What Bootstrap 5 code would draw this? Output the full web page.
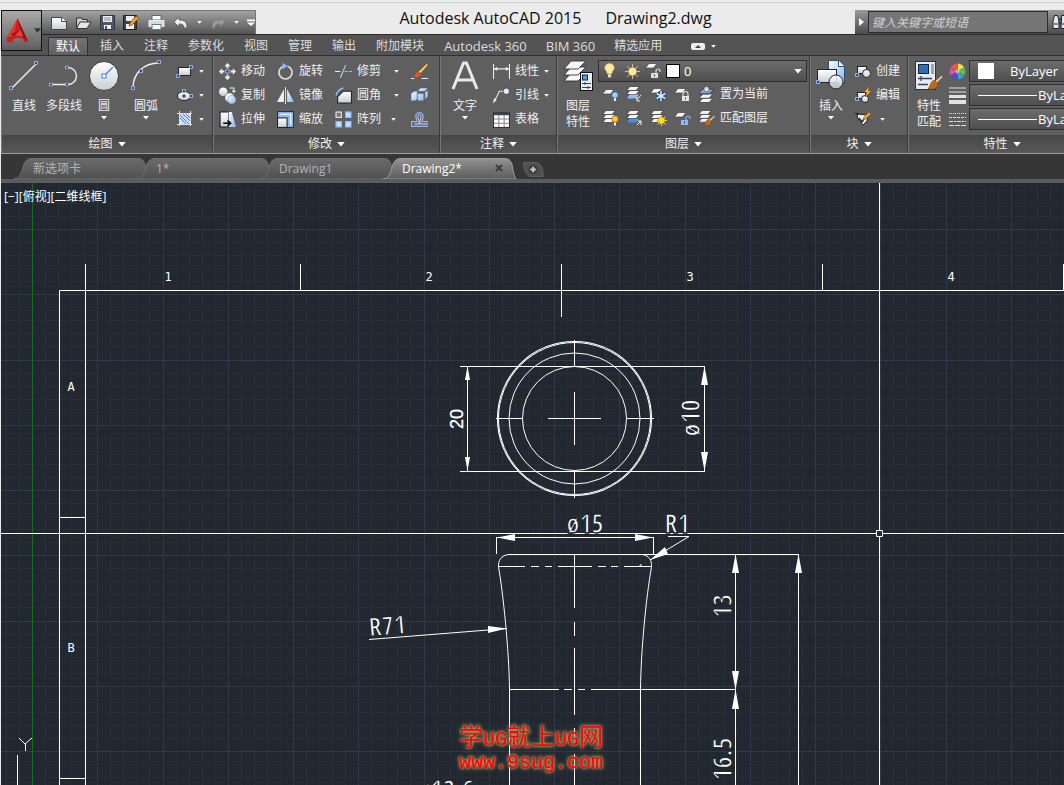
<!DOCTYPE html>
<html lang="zh-CN">
<head>
<meta charset="utf-8">
<meta name="viewport" content="width=device-width, initial-scale=1">
<title>Autodesk AutoCAD 2015 - Drawing2.dwg</title>
<link rel="stylesheet" href="https://cdn.jsdelivr.net/npm/bootstrap@5.3.0/dist/css/bootstrap.min.css">
<style>
body{font:12px/16px "Open Sans","Noto Sans CJK SC",sans-serif;color:#f0f0f0;background:#ebebeb;overflow:hidden}
button{color:inherit;background:none;border:0;padding:0;font:inherit}
svg{display:block;flex:none}
.topline{height:10px;padding-top:2px}
.topline::before{content:"";display:block;height:1px;background:#cfcfcf}
.head{display:grid;grid-template-columns:42px minmax(0,1fr);grid-template-rows:24px 21px;background:#ebebeb}
.appbtn{grid-column:1;grid-row:1/3;z-index:1;height:41px;margin-left:1px;border:1px solid #111;background:linear-gradient(#aaa,#5e5e5e)}
.titlerow{grid-column:2;grid-row:1}
.menu{grid-column:1/3;grid-row:2;background:#545454;border-top:1px solid #2b2b2b;margin-left:1px;padding-left:45px}
.qat{width:214px;padding-left:9px;background:linear-gradient(#a2a2a2,#545454);border-top:1px solid #777;border-right:1px solid #777}
.wintitle{font-size:16px;line-height:16px;color:#111;padding-bottom:8px;white-space:nowrap}
.search{width:209px;background:linear-gradient(#999,#4c4c4c);overflow:hidden}
.search input{flex:none;width:180px;height:22px;background:#757575;border:1px solid #2c2c2c;color:#fff;font:italic 12px/20px "Open Sans","Noto Sans CJK SC",sans-serif;padding:0 3px;border-radius:0}
.search input::placeholder{color:#d2d2d2;opacity:1}
.menu button{height:18px;padding:0 10px;color:#dcdcdc;align-self:end;white-space:nowrap}
.menu .lat{font-size:13px;padding:0 9px 0 10px}
.menu .cur{color:#fff;background:linear-gradient(#747474,#606060);border:1px solid #2f2f2f;border-bottom:0;padding:0 7px;margin:0 2px;border-radius:2px 2px 0 0}
.ribbon{background:#5f5f5f;border-top:1px solid #2f2f2f;height:98px;overflow:hidden;margin-left:1px}
.pane{flex:none;border-right:1px solid #3a3a3a;border-left:1px solid #787878;display:flex;flex-direction:column}
.pane-body{height:79px;padding-top:3px;display:flex;align-items:flex-start}
.pane-name{height:18px;background:linear-gradient(#474747,#585858);width:100%;display:flex;justify-content:center;align-items:center;gap:5px}
.w-draw{width:212px}.w-mod{width:227px}.w-note{width:117px}.w-layer{width:253px}.w-block{width:98px}.w-prop{width:188px}
.w-draw .pane-body{padding-left:2px}
.w-mod .pane-body{padding-left:5px}
.big{width:40px;display:flex;flex-direction:column;align-items:center;height:68px}
.big.wide{width:44px}
.big svg.ic{height:32px;width:32px;margin-bottom:7px}
.big .dn{margin-top:2px}
.stack{display:grid;grid-auto-rows:24px;align-items:center;height:72px}
.tool{display:flex;align-items:center;gap:5px;height:24px;white-space:nowrap}
.tool .dn{margin-left:5px}
.combo{height:22px;background:linear-gradient(#6c6c6c,#4f4f4f);border:1px solid #2e2e2e;display:flex;align-items:center}
.combo select{appearance:none;background:none;border:0;color:#fff;font:inherit;font-size:13px;line-height:18px;padding:0;height:20px;flex:1;outline:0}
.combo option{color:#000}
.layer-combo{width:209px;margin-top:1px}
.layer-grid{display:grid;grid-template-columns:repeat(4,24px) auto;grid-auto-rows:24px;align-items:center;padding-left:4px}
.marks{width:20px}
.props{width:126px}
.chip{width:14px;height:14px;background:#fff;border:1px solid #000}
.chip2{width:16px;height:16px;background:#fff}
.work{min-height:0}
.files{height:30px;background:#363636;border-top:1px solid #9b9b9b;border-bottom:4px solid #5c5c5c;margin-left:1px;padding:4px 0 0 22px}
.ftab{position:relative;width:123px;height:21px;color:#b4b4b4;text-align:left;padding:0 0 0 10px;line-height:20px}
.ftab .shape{position:absolute;left:-9px;top:0;z-index:0}
.ftab span{position:relative;z-index:1}
.ftab.on{color:#fff;z-index:2}
.ftab .x{position:absolute;z-index:1;right:12px;top:6px}
.sheet{background:#212830;margin-left:1px;min-height:0;overflow:hidden;position:relative}
.sheet>svg{width:100%;height:100%}
.cad{stroke:#fff;fill:none;stroke-width:1}
.cad .solid{fill:#fff;stroke:none}
.dim{font-family:"Liberation Sans Narrow","Open Sans Condensed","DejaVu Sans Light",sans-serif;font-size:26px;fill:#fff;stroke:#212830;stroke-width:1.4;text-anchor:middle}
.mono{font:12px "DejaVu Sans Mono",monospace;fill:#fff;text-anchor:middle}
.wm{font:20px "Liberation Mono",monospace;fill:#f00;stroke:#f00;stroke-width:.3;text-anchor:middle;filter:drop-shadow(0 0 1px #cdbb7d) drop-shadow(0 0 2px #9d8b5d)}
.wm .han{font-size:24px;stroke:none;font-family:"Noto Sans CJK SC",sans-serif}
</style>
</head>
<body class="vh-100 d-flex flex-column">
<svg width="0" height="0" class="position-absolute" aria-hidden="true">
<defs>
<linearGradient id="gw" x2="0" y2="1"><stop stop-color="#fff"/><stop offset="1" stop-color="#c9ced6"/></linearGradient>
<linearGradient id="gb" x2="1" y2="1"><stop stop-color="#fff"/><stop offset="1" stop-color="#7fb2ee"/></linearGradient>
<linearGradient id="gt" x2="0" y2="1"><stop stop-color="#6b6b6b"/><stop offset="1" stop-color="#505050"/></linearGradient>
<linearGradient id="ga" x2="0" y2="1"><stop stop-color="#929292"/><stop offset="1" stop-color="#5c5c5c"/></linearGradient>
<symbol id="dn" viewBox="0 0 6 4"><path d="M0 0h6L3 3.5z" fill="#fff"/></symbol>
<symbol id="grip" viewBox="0 0 4 4"><path d="M.5 .5h3v3h-3z" fill="#444" stroke="#8bb8ff"/></symbol>
<symbol id="sheetw" viewBox="0 0 12 6"><path d="M4 .5h8L8.500 5H.5z" fill="#f4f4f4" stroke="#333" stroke-width=".6"/></symbol>
<symbol id="sheets" viewBox="0 0 14 13"><g fill="#f4f4f4" stroke="#333" stroke-width=".7"><path d="M4 8.500h9.500L10 12.500H.5z"/><path d="M4 4.500h9.500L10 8.500H.5z"/><path d="M4 .5h9.500L10 4.500H.5z"/></g></symbol>
<symbol id="bulb" viewBox="0 0 10 15"><path d="M5 .5a4 4 0 0 1 3 7L7 10H3L2 7.500a4 4 0 0 1 3-7z" fill="#ffe99a" stroke="#d8b860" stroke-width=".6"/><path d="M3.500 10.500h3v3h-3z" fill="#ddd"/></symbol>
<symbol id="brush" viewBox="0 0 16 16"><path d="M15 0l1 2-7 7-2-2z" fill="#e8c98c" stroke="#533" stroke-width=".5"/><path d="M7 5l4 4c0 4-4 6-10 5 2-2 2-7 6-9z" fill="#c06a1c" stroke="#6b3408" stroke-width=".5"/></symbol>
<symbol id="lock" viewBox="0 0 9 10"><path d="M2 5V3a2.500 2.500 0 0 1 5 0v2" fill="none" stroke="#ddd" stroke-width="1.200"/><path d="M1 5h7v5H1z" fill="#e8e8e8"/><path d="M4 6.500h1v2H4z" fill="#444"/></symbol>
<symbol id="unlock" viewBox="0 0 10 10"><path d="M5 5V3a2 2 0 0 1 4 0v1" fill="none" stroke="currentColor" stroke-width="1.200"/><path d="M0 5h7v5H0z" fill="currentColor"/><path d="M3 6.500h1v2H3z" fill="#444"/></symbol>
<symbol id="sun" viewBox="0 0 16 16"><path d="M8 1v14M1 8h14M3 3l10 10M13 3L3 13" stroke="#e9dca6" stroke-width=".8"/><circle cx="8" cy="8" r="4" fill="#ffe9a0" stroke="#8d8050" stroke-width=".6"/></symbol>
</defs>
</svg>

<div class="topline"></div>
<header class="head">
  <button class="appbtn d-flex align-items-center gap-1 ps-1" aria-label="应用程序菜单">
    <svg width="24" height="26" viewBox="0 0 25 26"><path d="M12 0L1 20l-.5 4L7 25v-3l4-2 7 1 1 4 4-1z" fill="#c9201f"/><path d="M12 0L1 20l7-3z" fill="#e23a33"/><path d="M12 0l11 24-6-5z" fill="#8d1012"/><path d="M3 19c6-2 9-5 12-8l3 8c-6-2-10-1-15 0z" fill="#e8413a"/><path d="M5 16l11-5-8 8z" fill="#a01618"/></svg>
    <svg width="7" height="5" viewBox="0 0 6 4"><path d="M0 0h6L3 4z" fill="#2c3440"/></svg>
  </button>
  <div class="titlerow d-flex">
    <div class="qat d-flex align-items-center">
      <button class="me-2" aria-label="新建"><svg width="16" height="14" viewBox="0 0 16 14"><path d="M.5 1.500h10l5 4v8H.5z" fill="url(#gw)" stroke="#444"/><path d="M10.500 1.500v4h5" fill="#fff" stroke="#444"/></svg></button>
      <button class="me-2" aria-label="打开"><svg width="17" height="14" viewBox="0 0 17 14"><path d="M1.500 12V2h5l1 1.500h5V6" fill="#ccc" stroke="#333"/><path d="M1.500 12.500L5 6h11l-4 6.500z" fill="#e5e5e5" stroke="#333"/></svg></button>
      <button class="me-2" aria-label="保存"><svg width="15" height="15" viewBox="0 0 15 15"><path d="M.5.5h14v14H.5z" fill="#4c5666" stroke="#2d3644"/><path d="M3 1h9v6H3zM4 10h7v4H4z" fill="#eee"/><path d="M4 3h7M4 5h7" stroke="#888"/><path d="M5 11h2v3H5z" fill="#456"/></svg></button>
      <button class="me-2" aria-label="另存为"><svg width="17" height="15" viewBox="0 0 17 15"><path d="M.5.5h13v14H.5z" fill="#3c4450" stroke="#222"/><path d="M3 1h8v5H3zM3 9h8v5H3z" fill="#eee"/><path d="M6 11l1-3 6-7 3 2-7 7z" fill="#f0a030" stroke="#803c10" stroke-width=".7"/></svg></button>
      <button class="me-2" aria-label="打印"><svg width="17" height="15" viewBox="0 0 17 15"><path d="M4 .5h9V5H4z" fill="#fff" stroke="#567"/><path d="M1 5.500h15v6H1z" fill="#d5dae2" stroke="#eee"/><path d="M4 9.500h9v5H4z" fill="#f7f7f7" stroke="#678"/></svg></button>
      <button aria-label="放弃"><svg width="16" height="13" viewBox="0 0 16 13"><path d="M6 1v3c6 0 8 2 8 8h-3c0-3-1-4-5-4v3L1 6z" fill="#eee" stroke="#555" stroke-width=".8"/></svg></button>
      <svg width="5" height="3" class="ms-2 me-2"><use href="#dn"/></svg>
      <button aria-label="重做"><svg width="16" height="13" viewBox="0 0 16 13"><path d="M10 1v3C4 4 2 6 2 12h3c0-3 1-4 5-4v3l5-5z" fill="#9a9a9a" stroke="#777" stroke-width=".8"/></svg></button>
      <svg width="5" height="3" class="ms-2 me-2"><use href="#dn"/></svg>
      <svg width="8" height="8" viewBox="0 0 9 8"><path d="M0 0h9v2H0zM0 3.500h9l-4.500 4z" fill="#fff"/></svg>
    </div>
    <div class="wintitle flex-grow-1 d-flex align-items-center justify-content-center gap-4"><span>Autodesk AutoCAD 2015</span><span>Drawing2.dwg</span></div>
    <div class="search d-flex align-items-center">
      <button class="px-1" aria-label="展开"><svg width="5" height="8" viewBox="0 0 5 8"><path d="M0 0l5 4-5 4z" fill="#fff"/></svg></button>
      <input type="text" aria-label="搜索" placeholder="键入关键字或短语">
      <button class="ms-1" aria-label="查找"><svg width="17" height="16" viewBox="0 0 17 16"><g fill="#e4e7ec" stroke="#222"><path d="M2.500 1.500h3L7 6v8.500H1V7z"/><path d="M9.500 1.500h3L15 6v8.500H9z"/></g><path d="M2 10h4M10 10h4M7 5h2v4H7z" stroke="#223" fill="#889"/></svg></button>
    </div>
  </div>
  <nav class="menu d-flex">
    <button class="cur">默认</button><button>插入</button><button>注释</button><button>参数化</button><button>视图</button><button>管理</button><button>输出</button><button>附加模块</button><button class="lat">Autodesk 360</button><button class="lat">BIM 360</button><button>精选应用</button>
    <button class="d-flex align-items-center gap-1 ms-1" aria-label="最小化"><svg width="17" height="9" viewBox="0 0 17 9" class="ms-1"><rect x="1" y="1" width="14" height="7" rx="2" fill="#eee"/><path d="M5 6h6L8 3z" fill="#444"/></svg><svg width="5" height="3"><use href="#dn"/></svg></button>
  </nav>
</header>

<main class="work d-flex flex-column flex-grow-1">
<section class="ribbon d-flex" aria-label="功能区">
  <div class="pane w-draw">
    <div class="pane-body">
      <button class="big"><svg class="ic" viewBox="0 0 32 32"><path d="M4 29L28 5" stroke="#eee" stroke-width="1.400"/><use href="#grip" x="1" y="27" width="4" height="4"/><use href="#grip" x="26" y="2" width="4" height="4"/></svg>直线</button>
      <button class="big"><svg class="ic" viewBox="0 0 32 32"><path d="M3 25.500h17a8.500 8.500 0 0 0 0-17" fill="none" stroke="#eee" stroke-width="1.400"/><use href="#grip" x="1" y="23.500" width="4" height="4"/><use href="#grip" x="17" y="23.500" width="4" height="4"/><use href="#grip" x="17" y="6.500" width="4" height="4"/></svg>多段线</button>
      <button class="big"><svg class="ic" viewBox="0 0 32 32"><circle cx="16" cy="17" r="14.500" fill="url(#gw)" stroke="#3c3c3c"/><path d="M16 17l9-9" stroke="#3b83e8" stroke-width="1.300"/><rect x="14" y="15" width="4" height="4" fill="#fff" stroke="#3b83e8"/></svg>圆<svg class="dn" width="6" height="4"><use href="#dn"/></svg></button>
      <button class="big wide"><svg class="ic" viewBox="0 0 32 32"><path d="M3 29C3 14 14 4 29 4" fill="none" stroke="#eee" stroke-width="1.400"/><use href="#grip" x="1" y="27" width="4" height="4"/><use href="#grip" x="9" y="10" width="4" height="4"/><use href="#grip" x="27" y="1" width="4" height="4"/></svg>圆弧<svg class="dn" width="6" height="4"><use href="#dn"/></svg></button>
      <div class="stack ms-1 ps-1">
        <button class="tool" aria-label="矩形"><svg width="18" height="16" viewBox="0 0 18 16"><rect x="2.500" y="4.500" width="12" height="8" fill="url(#gw)" stroke="#222"/><use href="#grip" x="0" y="11" width="4" height="4"/><use href="#grip" x="13" y="2" width="4" height="4"/></svg><svg class="dn ms-0" width="5" height="3"><use href="#dn"/></svg></button>
        <button class="tool" aria-label="椭圆"><svg width="18" height="16" viewBox="0 0 18 16"><ellipse cx="8" cy="9" rx="6.500" ry="4.500" fill="url(#gw)" stroke="#222"/><path d="M6 9h4M8 7v4" stroke="#222"/><use href="#grip" x="6" y="2" width="4" height="4"/><use href="#grip" x="13" y="7" width="4" height="4"/></svg><svg class="dn ms-0" width="5" height="3"><use href="#dn"/></svg></button>
        <button class="tool" aria-label="图案填充"><svg width="18" height="18" viewBox="0 0 18 18"><rect x="3.500" y="3.500" width="11" height="11" fill="#cfe0f8"/><path d="M4 8l6 6M4 5l10 10M7 4l8 8M10 4l4 4" stroke="#4a7fd0"/><path d="M3.500 1v15M1 3.500h15M14.500 1v15M1 14.500h15" stroke="#ddd"/></svg><svg class="dn ms-0" width="5" height="3"><use href="#dn"/></svg></button>
      </div>
    </div>
    <button class="pane-name">绘图<svg width="8" height="5"><use href="#dn"/></svg></button>
  </div>

  <div class="pane w-mod">
    <div class="pane-body">
      <div class="stack me-2 pe-1">
        <button class="tool"><svg width="17" height="17" viewBox="0 0 16 16"><path d="M8 0l3 3H9v2H7V3H5zM8 16l-3-3h2v-2h2v2h2zM0 8l3-3v2h2v2H3v2zM16 8l-3 3V9h-2V7h2V5z" fill="#eee"/><rect x="6.500" y="6.500" width="3" height="3" fill="#333" stroke="#8bb8ff"/></svg>移动</button>
        <button class="tool"><svg width="17" height="17" viewBox="0 0 16 16"><circle cx="4" cy="4.500" r="4" fill="url(#gw)"/><circle cx="10" cy="10" r="4.500" fill="#f1f5fb" stroke="#555" stroke-width=".6"/><circle cx="12" cy="12" r="4" fill="url(#gb)" stroke="#667" stroke-width=".4"/><path d="M10 1h4v4M12.500 3.500L14 5l1.500-1.500" fill="none" stroke="#eee"/></svg>复制</button>
        <button class="tool"><svg width="17" height="17" viewBox="0 0 16 16"><path d="M1 1h8v14H1z" fill="url(#gw)" stroke="#222"/><path d="M9 1h3l4 14H9z" fill="url(#gb)"/><path d="M4 11.500h6M8 9l3 2.500L8 14" stroke="#000" fill="none" stroke-width="1.400"/></svg>拉伸</button>
      </div>
      <div class="stack me-2 pe-1">
        <button class="tool"><svg width="17" height="17" viewBox="0 0 16 16"><path d="M10 3a6.200 6.200 0 1 1-4 0" fill="none" stroke="#ddd" stroke-width="1.500"/><path d="M5 0l5 2.500L5.500 6z" fill="#8bb8ff"/></svg>旋转</button>
        <button class="tool"><svg width="17" height="17" viewBox="0 0 16 16"><path d="M6.500 2v12H0z" fill="#eee"/><path d="M9.500 2v12H16z" fill="url(#gb)"/><path d="M8 0v16" stroke="#ddd"/></svg>镜像</button>
        <button class="tool"><svg width="17" height="17" viewBox="0 0 16 16"><rect x=".5" y=".5" width="15" height="15" fill="#8fbcf2" stroke="#234"/><path d="M3 3h10v10" fill="none" stroke="#fff"/><rect x=".5" y="6.500" width="9" height="9" fill="url(#gw)" stroke="#222"/></svg>缩放</button>
      </div>
      <div class="stack">
        <button class="tool"><svg width="17" height="17" viewBox="0 0 16 16"><path d="M5 14L10 2" stroke="#bcd8ff"/><path d="M0 8h5" stroke="#eee"/><path d="M9 8h7" stroke="#8bb8ff" stroke-dasharray="3 1"/></svg>修剪<svg class="dn ms-2" width="5" height="3"><use href="#dn"/></svg></button>
        <button class="tool"><svg width="17" height="17" viewBox="0 0 16 16"><path d="M2.500 15V9l5-5h8v11z" fill="url(#gw)" stroke="#222"/><path d="M1 8c1-4 3-6 7-7" fill="none" stroke="#8bb8ff" stroke-width="1.500"/></svg>圆角<svg class="dn ms-2" width="5" height="3"><use href="#dn"/></svg></button>
        <button class="tool"><svg width="17" height="17" viewBox="0 0 16 16"><g fill="#cfe2fb" stroke="#8bb8ff" stroke-width="1.200"><rect x="1" y="1" width="5" height="5" fill="#777" stroke="#ddd"/><rect x="10" y="1" width="5" height="5"/><rect x="1" y="10" width="5" height="5"/><rect x="10" y="10" width="5" height="5"/></g></svg>阵列<svg class="dn" width="5" height="3"><use href="#dn"/></svg></button>
      </div>
      <div class="stack ms-2 ps-1">
        <button class="tool" aria-label="删除"><svg width="17" height="17" viewBox="0 0 16 16"><path d="M15 0l1 2-7 8-2-2z" fill="#f5c65a" stroke="#533" stroke-width=".5"/><path d="M7 8l2 2c0 3-3 4-6 3 1-2 1-4 4-5z" fill="#e2571c"/><path d="M0 14.500h3M10 14.500h6" stroke="#eee"/></svg></button>
        <button class="tool" aria-label="分解"><svg width="17" height="17" viewBox="0 0 16 16"><path d="M0 6l3-2h3v7l-2 2H0zM6 4l3-3h7l-3 3zM6 6h6v7H6zM13 5l3-2v6l-3 3z" fill="url(#gb)" stroke="#456" stroke-width=".4"/></svg></button>
        <button class="tool" aria-label="偏移"><svg width="17" height="17" viewBox="0 0 16 16"><path d="M16 14.500H.5V10H5.500C6 9 4.500 7 4.500 5a3.500 3.500 0 0 1 7 0c0 2-1.500 4-1 5H16" fill="none" stroke="#8bb8ff" stroke-width="1.200"/><path d="M3 12.300h4.500V9C7 8 6.500 6.500 6.500 5a1.500 1.500 0 0 1 3 0c0 1.500-.5 3-1 4v3.300H16" fill="none" stroke="#eee" stroke-width=".8"/></svg></button>
      </div>
    </div>
    <button class="pane-name">修改<svg width="8" height="5"><use href="#dn"/></svg></button>
  </div>

  <div class="pane w-note">
    <div class="pane-body ps-1">
      <button class="big"><svg class="ic" viewBox="0 0 32 32"><path d="M4 30L14.500 4h3L28 30M8 21h16" fill="none" stroke="#e8e8e8" stroke-width="3"/></svg>文字<svg class="dn" width="6" height="4"><use href="#dn"/></svg></button>
      <div class="stack ms-2">
        <button class="tool"><svg width="17" height="17" viewBox="0 0 16 16"><path d="M.5 1v14M15.500 1v14M1 5.500h14" stroke="#eee"/><path d="M1 5.500l3-2v4zM15 5.500l-3-2v4z" fill="#eee"/></svg>线性<svg class="dn ms-0" width="5" height="3"><use href="#dn"/></svg></button>
        <button class="tool"><svg width="17" height="17" viewBox="0 0 16 16"><path d="M1 14L6 4h4" fill="none" stroke="#eee"/><path d="M0 15.500l1-5 2.500 1.500z" fill="#eee"/><circle cx="12.500" cy="4" r="3" fill="#dcebff" stroke="#222" stroke-width=".6"/></svg>引线<svg class="dn ms-0" width="5" height="3"><use href="#dn"/></svg></button>
        <button class="tool"><svg width="17" height="17" viewBox="0 0 16 16"><path d="M.5 1.500h15v14H.5z" fill="#fff" stroke="#333"/><path d="M1 1h14v3H1z" fill="#39424f"/><path d="M1 7.500h14M1 11.500h14M5.500 4v11M10.500 4v11" stroke="#888"/></svg>表格</button>
      </div>
    </div>
    <button class="pane-name">注释<svg width="8" height="5"><use href="#dn"/></svg></button>
  </div>

  <div class="pane w-layer">
    <div class="pane-body">
      <button class="big"><svg class="ic" viewBox="0 0 32 32"><g fill="#f6f6f6" stroke="#222" stroke-width=".8"><path d="M9 14h15l-8 8H2z"/><path d="M9 8h15l-8 8H2z"/><path d="M9 2h15l-8 8H2z"/></g><rect x="18.500" y="13.500" width="12" height="18" fill="#e9eef6" stroke="#111"/><rect x="20.500" y="16" width="5" height="5" fill="#5c9be6" stroke="#124"/><path d="M20 24.500h9M20 28.500h9M23 23v3M26 27v3" stroke="#345"/></svg><span>图层<br>特性</span></button>
      <div class="d-flex flex-column">
        <div class="combo layer-combo">
          <svg class="mx-1" width="13" height="16"><use href="#bulb"/></svg>
          <svg class="ms-1" width="17" height="17"><use href="#sun"/></svg>
          <svg class="mx-1" width="17" height="16" viewBox="0 0 17 16" color="#ddd"><use href="#sheetw" x="0" y="0" width="12" height="6"/><use href="#unlock" x="6" y="5" width="10" height="10"/></svg>
          <span class="chip me-1"></span>
          <select aria-label="图层"><option>0</option></select>
          <svg class="me-1" width="8" height="5"><use href="#dn"/></svg>
        </div>
        <div class="layer-grid">
            <button aria-label="关闭图层"><svg width="17" height="16" viewBox="0 0 17 16"><use href="#sheetw" y="3" width="12" height="6"/><circle cx="13" cy="9" r="3" fill="#a8d0ff" stroke="#3a78c8" stroke-width=".7"/><path d="M13 12v3" stroke="#eee" stroke-width="2"/></svg></button>
            <button aria-label="隔离图层"><svg width="17" height="16" viewBox="0 0 17 16"><use href="#sheets" width="14" height="13"/><path d="M4 8.500h9L10 12.500H1z" fill="#8fbcf2"/><path d="M15 9l-4 5M11 11v4h3" stroke="#eee" fill="none"/></svg></button>
            <button aria-label="冻结图层"><svg width="17" height="16" viewBox="0 0 17 16"><use href="#sheetw" y="2" width="12" height="6"/><circle cx="11" cy="10" r="5" fill="#2b4f80"/><path d="M11 5v10M6.700 7.500l8.600 5M6.700 12.500l8.600-5" stroke="#d5e9ff" stroke-width="1.500"/></svg></button>
            <button aria-label="锁定图层"><svg width="17" height="16" viewBox="0 0 17 16"><use href="#sheetw" y="2" width="12" height="6"/><use href="#lock" x="7" y="5" width="9" height="10"/></svg></button>
            <button class="tool"><svg width="17" height="17" viewBox="0 0 16 16"><use href="#sheets" y="3" width="15" height="13"/><path d="M4 3h11l-4 4H1z" fill="#7aa9e8" stroke="#234" stroke-width=".6"/><circle cx="8" cy="3" r="2.500" fill="#ddd" stroke="#333" stroke-width=".5"/></svg>置为当前</button>
            <button aria-label="打开所有图层"><svg width="17" height="16" viewBox="0 0 17 16"><use href="#sheets" width="14" height="13"/><circle cx="13" cy="9" r="3" fill="#ffd34d" stroke="#e27a12" stroke-width="1.200"/><path d="M13 12.500v3" stroke="#eee" stroke-width="2"/></svg></button>
            <button aria-label="取消隔离"><svg width="17" height="16" viewBox="0 0 17 16"><use href="#sheets" width="14" height="13"/><path d="M4 8.500h9L10 12.500H1z" fill="#4f8de0"/><path d="M11 15l4-4M12 11h3v4" stroke="#fff" fill="none"/></svg></button>
            <button aria-label="解冻所有图层"><svg width="17" height="16" viewBox="0 0 17 16"><use href="#sheets" width="14" height="13"/><path d="M11.500 5v11M6 10.500h11M7.500 6.500l8 8M15.500 6.500l-8 8" stroke="#ffd91c"/><circle cx="11.500" cy="10.500" r="3.500" fill="#ffe21c" stroke="#c07a10" stroke-width=".6"/></svg></button>
            <button aria-label="解锁图层"><svg width="17" height="16" viewBox="0 0 17 16" color="#8bb8ff"><use href="#sheetw" y="2" width="12" height="6"/><use href="#unlock" x="7" y="5" width="10" height="10"/></svg></button>
            <button class="tool"><svg width="17" height="17" viewBox="0 0 16 16"><use href="#sheets" width="13" height="12"/><use href="#brush" x="5" y="5" width="11" height="11"/></svg>匹配图层</button>
        </div>
      </div>
    </div>
    <button class="pane-name">图层<svg width="8" height="5"><use href="#dn"/></svg></button>
  </div>

  <div class="pane w-block">
    <div class="pane-body">
      <button class="big"><svg class="ic" viewBox="0 0 32 32"><path d="M13.500 1.500h10l6 6v17h-16z" fill="url(#gb)" stroke="#2b4d7c"/><path d="M23.500 1.500v6h6" fill="#fff" stroke="#2b4d7c"/><rect x="2.500" y="10.500" width="19" height="13" fill="url(#gw)" stroke="#222"/><circle cx="21" cy="23" r="7" fill="url(#gw)" fill-opacity=".85" stroke="#222"/><use href="#grip" x="1" y="21" width="4" height="4"/></svg>插入<svg class="dn" width="6" height="4"><use href="#dn"/></svg></button>
      <div class="stack ms-1">
        <button class="tool"><svg width="16" height="16" viewBox="0 0 16 16"><rect x="2.500" y="3.500" width="9" height="7" fill="url(#gw)" stroke="#222"/><circle cx="11.500" cy="10.500" r="4" fill="url(#gw)" stroke="#222"/><use href="#grip" y="10" width="4" height="4"/></svg>创建</button>
        <button class="tool"><svg width="16" height="16" viewBox="0 0 16 16"><rect x="2.500" y="5.500" width="8" height="6" fill="url(#gw)" stroke="#222"/><circle cx="10" cy="12" r="3.500" fill="url(#gw)" stroke="#222"/><path d="M14 0L9 5h3l-2 5 6-6h-3z" fill="#ffc23a" stroke="#a35b08" stroke-width=".5"/><use href="#grip" y="10" width="4" height="4"/></svg>编辑</button>
        <button class="tool" aria-label="编辑属性"><svg width="16" height="16" viewBox="0 0 16 16"><path d="M2 3l11 1-1 6-4 4-5-6z" fill="#eee" stroke="#222"/><path d="M0 2l4 1" stroke="#222"/><path d="M4 7l3 4 2-3" fill="none" stroke="#222" stroke-width="1.400"/><path d="M14 1l2 2-5 5-3 1 1-3z" fill="#f0a030" stroke="#803c10" stroke-width=".5"/></svg><svg class="dn ms-1" width="5" height="3"><use href="#dn"/></svg></button>
      </div>
    </div>
    <button class="pane-name">块<svg width="8" height="5"><use href="#dn"/></svg></button>
  </div>

  <div class="pane w-prop">
    <div class="pane-body">
      <button class="big"><svg class="ic" viewBox="0 0 32 32"><rect x="2.500" y="2.500" width="20" height="28" fill="#e6ebf2" stroke="#2b3340"/><rect x="5.500" y="5.500" width="10" height="9" fill="#2f6fb4" stroke="#123"/><path d="M18 5h3v10h-3z" fill="#9aa7b8"/><path d="M5 19.500h14M5 25.500h10M8 17v5" stroke="#345" stroke-width="1.300"/><use href="#brush" x="13" y="16" width="18" height="16"/></svg><span>特性<br>匹配</span></button>
      <div class="stack marks">
        <svg width="17" height="17" viewBox="-8 -8 16 16"><g stroke="#555" stroke-width=".3"><path d="M0 0V-7.500A7.500 7.500 0 0 1 6.500-3.700z" fill="#f4e34a"/><path d="M0 0L6.500-3.700A7.500 7.500 0 0 1 6.500 3.700z" fill="#63c04a"/><path d="M0 0L6.500 3.700A7.500 7.500 0 0 1 0 7.500z" fill="#38a5c8"/><path d="M0 0V7.500A7.500 7.500 0 0 1-6.500 3.700z" fill="#4b50c8"/><path d="M0 0L-6.500 3.700A7.500 7.500 0 0 1-6.500-3.700z" fill="#d850b8"/><path d="M0 0L-6.500-3.700A7.500 7.500 0 0 1 0-7.500z" fill="#ee5a40"/></g><circle r="2" fill="#fff" opacity=".5"/></svg>
        <svg width="17" height="17" viewBox="0 0 17 17"><path d="M0 1h17M0 5h17" stroke="#e2e2e2" stroke-width="1"/><path d="M0 9.500h17" stroke="#e2e2e2" stroke-width="3"/><path d="M0 15h17" stroke="#e2e2e2" stroke-width="4"/></svg>
        <svg width="17" height="15" viewBox="0 0 17 15"><path d="M0 1.500h17" stroke="#e2e2e2" stroke-dasharray="1 1"/><path d="M0 5.500h17" stroke="#e2e2e2" stroke-dasharray="3 1"/><path d="M0 9.500h17" stroke="#e2e2e2" stroke-dasharray="4 1 2 1"/><path d="M0 13.500h17" stroke="#e2e2e2" stroke-dasharray="5 1"/></svg>
      </div>
      <div class="stack props">
        <div class="combo"><span class="chip2 ms-2 me-2"></span><span class="ps-1"></span><select aria-label="颜色" class="ms-1"><option>ByLayer</option></select></div>
        <div class="combo"><svg class="ms-2" width="60" height="3"><path d="M0 1.500h59" stroke="#fff"/></svg><select aria-label="线宽"><option>ByLayer</option></select></div>
        <div class="combo"><svg class="ms-2" width="60" height="3"><path d="M0 1.500h59" stroke="#fff"/></svg><select aria-label="线型"><option>ByLayer</option></select></div>
      </div>
    </div>
    <button class="pane-name">特性<svg width="8" height="5"><use href="#dn"/></svg></button>
  </div>
</section>

<nav class="files d-flex align-items-start" aria-label="图形选项卡">
  <button class="ftab"><svg class="shape" width="140" height="21" viewBox="0 0 140 21"><path d="M0 21C11 21 6 .5 17 .5H124C134 .5 130 14 135 21z" fill="url(#gt)" stroke="#6f6f6f"/></svg><span>新选项卡</span></button>
  <button class="ftab"><svg class="shape" width="140" height="21" viewBox="0 0 140 21"><path d="M0 21C11 21 6 .5 17 .5H124C134 .5 130 14 135 21z" fill="url(#gt)" stroke="#6f6f6f"/></svg><span>1*</span></button>
  <button class="ftab"><svg class="shape" width="140" height="21" viewBox="0 0 140 21"><path d="M0 21C11 21 6 .5 17 .5H124C134 .5 130 14 135 21z" fill="url(#gt)" stroke="#6f6f6f"/></svg><span>Drawing1</span></button>
  <button class="ftab on"><svg class="shape" width="140" height="21" viewBox="0 0 140 21"><path d="M0 21C11 21 6 .5 17 .5H122C132 .5 128 14 133 21z" fill="url(#ga)" stroke="#9a9a9a"/></svg><span>Drawing2*</span><svg class="x" width="8" height="8" viewBox="0 0 8 8"><path d="M1 1l6 6M7 1L1 7" stroke="#3c3c3c" stroke-width="2"/></svg></button>
  <button class="ms-2 mt-1" aria-label="新图形"><svg width="22" height="15" viewBox="0 0 24 16"><path d="M.5.5H13C20 .5 22 7 22 15.500H7C3 13 1 8 .5.5z" fill="#505050" stroke="#686868"/><circle cx="11" cy="8" r="5" fill="#3f3f3f"/><path d="M11 5v6M8 8h6" stroke="#ccc" stroke-width="2"/></svg></button>
</nav>

<section class="sheet flex-grow-1" aria-label="绘图区">
<svg role="img" aria-label="零件图">
<g transform="translate(-1,-183)">
  <g id="grid" shape-rendering="crispEdges"></g>
  <path d="M32.500 183V2000" stroke="#1c6a22"/>
  <g class="cad">
    <path d="M59.500 2000V290.500H4000M85.500 264V2000M300.500 264v26M561.500 264v53M822.500 264v26M1063.500 264v26M59.500 517.500h26M59.500 778.500h26"/>
    <path d="M1 533.500H876M883 533.500H4000M879.500 183V530M879.500 537V2000M876.500 530.500h6v6h-6z"/>
    <circle cx="574.500" cy="418.500" r="77" stroke-width="1.200"/><circle cx="574.500" cy="418.500" r="76"/><circle cx="574.500" cy="418.500" r="65.500"/><circle cx="574.500" cy="418.500" r="52"/>
    <path d="M548 418.500h53M574.500 392v53M574.500 340v27M574.500 471v27M496 418.500h27M627 418.500h27M460 366.500h245M460 471.500h245M467.500 366v105M704.500 366v105"/>
    <path class="solid" d="M467.500 366l2.500 14h-5zM467.500 471l2.500-14h-5zM704.500 366l3.500 19h-7zM704.500 471l3.500-19h-7z"/>
    <path d="M497 537.500h157M496.500 537v17M653.500 537v17M508 554.500h291"/>
    <path d="M509 554.500C501 555 498 561 498.500 567C503 592 509 650 509.500 689V2000M643 554.500C649 556 652 560 651.500 567C646 598 641 650 640.500 689V2000"/>
    <path d="M498 566.500h27M531 566.500h8M545 566.500h7M558 566.500h34M598 566.500h8M611 566.500h7M624 566.500h28M509 689.500h50M564 689.500h8M578 689.500h7M591 689.500h145M574.500 554v54M574.500 622v14M574.500 648v67M574.500 728v13M574.500 754V785"/>
    <path d="M640 567v-2h2M369 639.500L507 628.500M668 536.500h21L650 560M735.500 554V2000M798.500 554V2000M17.500 755V785M19 738l6 6 7-6M25.500 744v7"/>
    <path class="solid" d="M497 537.500l18-3.500v7zM653 537.500l-18-3.500v7zM507 628.500l-19-2.500v7zM650 560l15-13 3 7zM735.500 554l3.500 19h-7zM735.500 690l3.500-19h-7zM735.500 689l3.500 20h-7zM798.500 554l3.500 19h-7z"/>
  </g>
  <g class="dim">
    <text x="585" y="533">ø15</text><text x="677" y="533">R1</text>
    <text transform="translate(388,635) rotate(-5)">R71</text>
    <text transform="translate(700,418) rotate(-90)">ø10</text>
    <text transform="translate(732,606) rotate(-90)">13</text>
    <text transform="translate(732,759) rotate(-90)">16.5</text>
    <text x="446" y="799">ø12.6</text>
  </g>
  <text transform="translate(463,419) rotate(-90)" fill="#fff" stroke="#fff" stroke-width=".3" font-family="Liberation Sans" font-size="18" text-anchor="middle">20</text>
  <g class="mono"><text x="168" y="281">1</text><text x="429" y="281">2</text><text x="690" y="281">3</text><text x="951" y="281">4</text><text x="71" y="391">A</text><text x="71" y="652">B</text></g>
  <text x="4" y="201" fill="#fff" font-size="12">[−][俯视][二维线框]</text>
  <g class="wm"><text x="531" y="745"><tspan class="han">学</tspan>UG<tspan class="han">就上</tspan>UG<tspan class="han">网</tspan></text><text x="531" y="768">www.9sug.com</text></g>
</g>
</svg>
</section>
</main>
<script src="https://cdn.jsdelivr.net/npm/bootstrap@5.3.0/dist/js/bootstrap.bundle.min.js"></script>
<script>
const grid = document.getElementById('grid'), step = 13.05;
let minor = '', major = '';
for (let i = -3; i < 300; i++) {
  const x = Math.round(32 + i * step) + .5, y = Math.round(229 + i * step) + .5;
  const seg = `M${x} 183V2200M0 ${y}H4000`;
  if (i % 5) minor += seg; else major += seg;
}
grid.innerHTML = `<path d="${minor}" stroke="#282d39"/><path d="${major}" stroke="#32384b"/>`;
</script>
</body>
</html>
